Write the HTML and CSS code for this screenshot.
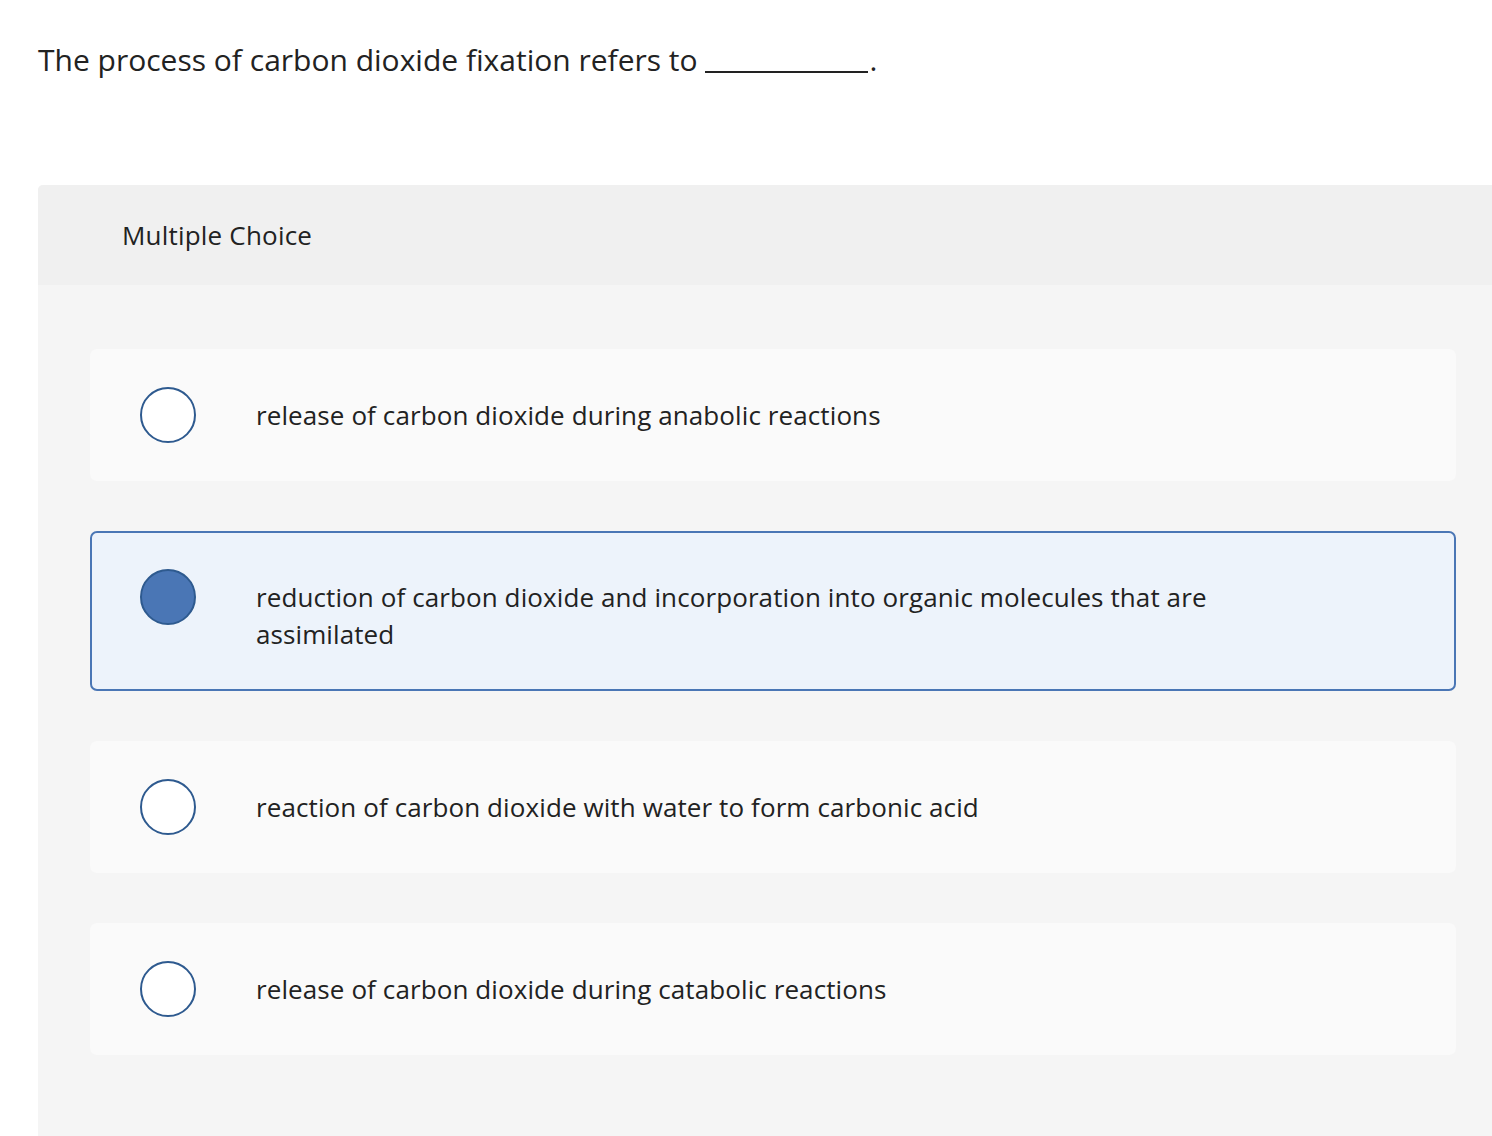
FILE: index.html
```html
<!DOCTYPE html>
<html>
<head>
<meta charset="utf-8">
<link rel="stylesheet" href="styles.css">
</head>
<body>
<div class="question">The process of carbon dioxide fixation refers to <span class="blank"></span>.</div>
<section class="panel">
  <header class="panel-head">Multiple Choice</header>
  <div class="options">
    <label class="option">
      <span class="radio"></span>
      <span class="text">release of carbon dioxide during anabolic reactions</span>
    </label>
    <label class="option selected">
      <span class="radio"></span>
      <span class="text">reduction of carbon dioxide and incorporation into organic molecules that are assimilated</span>
    </label>
    <label class="option">
      <span class="radio"></span>
      <span class="text">reaction of carbon dioxide with water to form carbonic acid</span>
    </label>
    <label class="option">
      <span class="radio"></span>
      <span class="text">release of carbon dioxide during catabolic reactions</span>
    </label>
  </div>
</section>
</body>
</html>
```
FILE: styles.css
```css
html, body {
  margin: 0;
  padding: 0;
  background: #ffffff;
}
body {
  font-family: "Open Sans", Lato, "Liberation Sans", sans-serif;
  color: #222222;
  overflow: hidden;
}
.question {
  padding: 42px 0 0 38px;
  font-size: 30px;
  line-height: 36px;
  height: 143px;
  box-sizing: border-box;
}
.blank {
  display: inline-block;
  width: 163px;
  border-bottom: 2px solid #222;
  vertical-align: baseline;
  margin-bottom: -2px;
  margin-right: 1px;
}
.panel {
  margin-left: 38px;
  margin-top: 42px;
  background: #f5f5f5;
  border-radius: 5px 0 0 0;
  min-height: 960px;
}
.panel-head {
  background: #f0f0f0;
  height: 100px;
  box-sizing: border-box;
  padding-left: 84px;
  display: flex;
  align-items: center;
  font-size: 26px;
  letter-spacing: 0.2px;
  border-radius: 5px 0 0 0;
}
.options {
  padding: 64px 36px 0 52px;
  display: flex;
  flex-direction: column;
  gap: 50px;
}
.option {
  display: flex;
  align-items: flex-start;
  background: #fafafa;
  border: 2px solid transparent;
  border-radius: 7px;
  padding: 36px 48px;
}
.option.selected {
  background: #edf3fb;
  border-color: #4a76b5;
}
.radio {
  flex: none;
  width: 56px;
  height: 56px;
  box-sizing: border-box;
  border: 2px solid #2e5a8f;
  border-radius: 50%;
  background: #ffffff;
  margin-right: 60px;
}
.selected .radio {
  background: #4a76b5;
  border-color: #2e5a8f;
}
.text {
  font-size: 26px;
  line-height: 37px;
  letter-spacing: 0.1px;
  padding: 10px 0 0;
  max-width: 980px;
}
```
